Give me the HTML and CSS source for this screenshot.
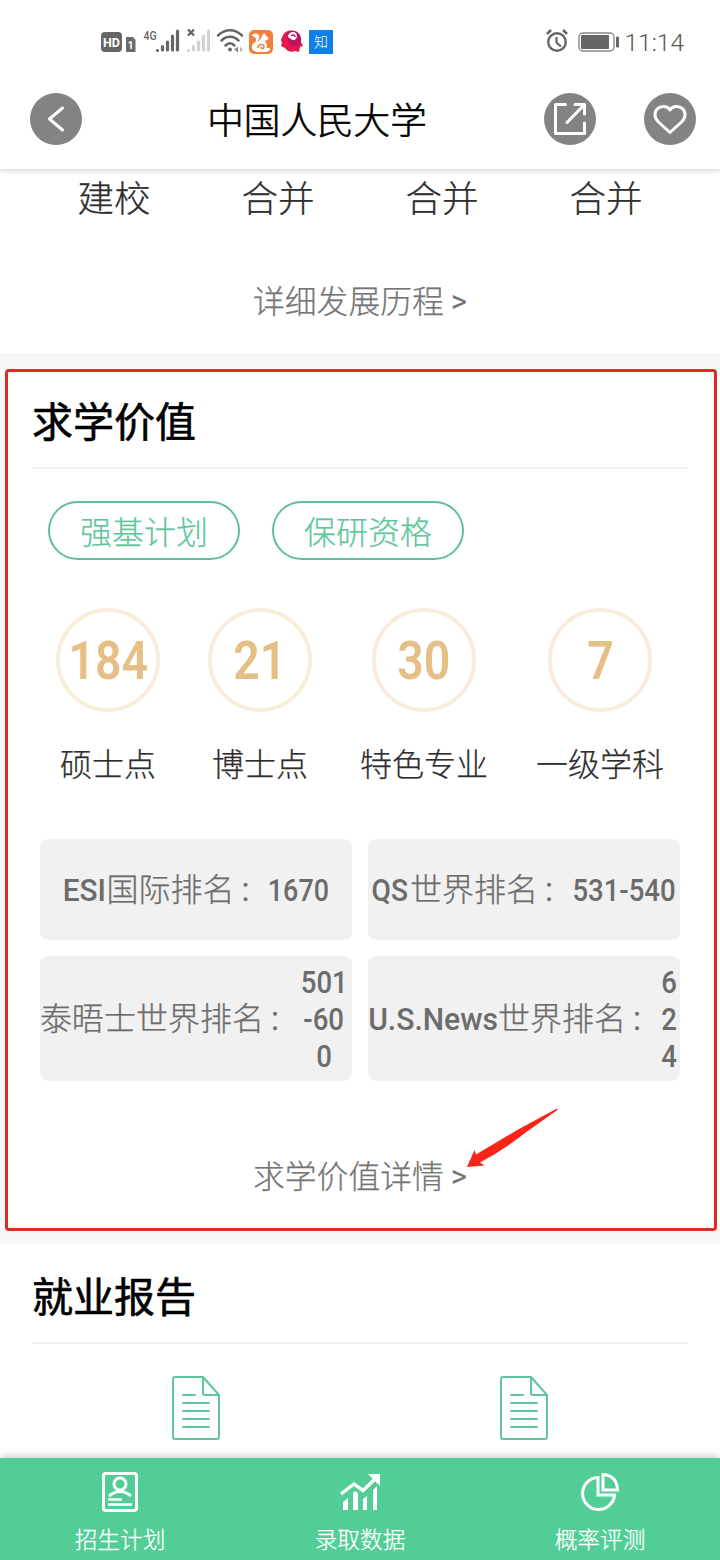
FILE: index.html
```
<!DOCTYPE html>
<html lang="zh-CN">
<head>
<meta charset="utf-8">
<title>中国人民大学</title>
<link rel="stylesheet" href="styles.css">
</head>
<body>
<div class="screen">
  <div class="status">
    <svg class="status-icons" width="240" height="30" viewBox="0 0 240 30">
      <rect x="1" y="5" width="21" height="20" rx="4" fill="#666"/>
      <text x="11.5" y="19.5" class="hd" text-anchor="middle">HD</text>
      <path d="M26 10h7l2.500 3v12h-9.500z" fill="#6c6c6c"/>
      <text x="30.700" y="22" class="sim" text-anchor="middle">1</text>
      <text x="43.500" y="12.500" class="net" textLength="13" lengthAdjust="spacingAndGlyphs">4G</text>
      <g stroke="#666" stroke-width="3.200" stroke-linecap="round">
        <path d="M57.500 23.500v0M62.500 23v-3.500M67.500 23v-8M72.500 23V9M77.500 23V4"/>
        <path d="M88.500 23.500v0M93.500 23v-3.500M98.500 23v-8M103.500 23V9M108.500 23V4" stroke="#d2d2d2"/>
      </g>
      <path d="M88 2.500l6 6M94 2.500l-6 6" stroke="#666" stroke-width="2.400"/>
      <g fill="none" stroke="#666" stroke-width="2.500" stroke-linecap="round">
        <path d="M118 8.500c7-7 17-7 24 0M121.500 13.500c5-5 12-5 17 0M125.500 18.500c3-3 6-3 9 0"/>
      </g>
      <circle cx="130" cy="22.500" r="2" fill="#666"/>
      <path d="M138 19.500v6l-4-3z" fill="#888"/><path d="M140 19.500v6l3-3z" fill="#bbb"/>
      <rect x="149" y="3" width="24" height="24" rx="5" fill="#f0803c"/>
      <path d="M151.500 9c2-4 8-3 8 1 0 2-2 3-2 5l4-4c0-2 1-4 3-5l1 2 3 3-1 2-3 1c2 2 3 4 2 7h3l1 2-4 2h-10c-5-1-6-5-3-9 1-2 2-2 2-4 0-1-1-3-4-3z" fill="#fff"/>
      <path d="M155 11c1 2 0 3-1 5M158 21c0-4 6-5 6-1 0 2-3 2-3 0" stroke="#f0803c" stroke-width="1.400" fill="none"/>
      <path d="M183 8c2-4 8-6 13-3 4 2 5 6 5 10l2 4-3 1-1 5-4-1c-4 2-8 0-10-3l-4-2 1-3-1-3z" fill="#e5174e"/>
      <path d="M187 7c4-6 13-3 14 4 1 5-2 8-6 8-5 0-8-5-8-12z" fill="#b81563"/>
      <path d="M188 10c0-6 9-7 9-1 0 4-4 5-6 3" fill="#fff"/>
      <path d="M191 9c1-2 4-1 4 1" stroke="#b81563" stroke-width="1.500" fill="none"/>
      <rect x="209" y="3" width="24" height="24" fill="#0d80ea"/>
      <text x="221" y="20" class="zhi" text-anchor="middle">知</text>
    </svg>
    <div class="status-right">
      <svg width="76" height="30" viewBox="0 0 76 30" fill="none" stroke="#666">
        <circle cx="14" cy="15" r="8.800" stroke-width="2.400"/>
        <path d="M13.500 10v5.500l4.500 4" stroke-width="2.200"/>
        <path d="M4 7l4-4M24 7l-4-4" stroke-width="2.600"/>
        <rect x="36" y="6" width="35" height="18" rx="4" stroke="#888" stroke-width="1.400"/>
        <rect x="38" y="8" width="28" height="14" rx="1" fill="#666" stroke="none"/>
        <rect x="73" y="9.500" width="3" height="11" rx="1.200" fill="#666" stroke="none"/>
      </svg>
      <span class="clock">11:14</span>
    </div>
  </div>

  <header class="header">
    <svg class="round-btn" viewBox="0 0 52 52"><circle cx="26" cy="26" r="26" fill="#838383"/><path d="M32.500 15L19.500 26l13 11" fill="none" stroke="#fff" stroke-width="3" stroke-linecap="round" stroke-linejoin="round"/></svg>
    <h1 class="school">中国人民大学</h1>
    <div class="header-actions">
      <svg class="round-btn" viewBox="0 0 52 52"><circle cx="26" cy="26" r="26" fill="#838383"/><g fill="none" stroke="#fff" stroke-width="3" stroke-linecap="round" stroke-linejoin="round"><path d="M21.500 11.500h-10v29h29V30"/><path d="M23 29.500L40 12M31 11.500h9.500V21"/></g></svg>
      <svg class="round-btn" viewBox="0 0 52 52"><circle cx="26" cy="26" r="26" fill="#838383"/><path d="M26 17c-4-6-15-4-15 5 0 3 1.500 5 3.500 7L26 39.500 37.500 29c2-2 3.500-4 3.500-7 0-9-11-11-15-5z" fill="none" stroke="#fff" stroke-width="3" stroke-linejoin="round"/></svg>
    </div>
  </header>

  <section class="history">
    <div class="events"><span>建校</span><span>合并</span><span>合并</span><span>合并</span></div>
    <a class="more">详细发展历程 <span class="gt">&gt;</span></a>
  </section>

  <section class="value">
    <h2 class="title">求学价值</h2>
    <div class="tags"><span class="tag">强基计划</span><span class="tag">保研资格</span></div>
    <div class="stats">
      <div class="stat"><div class="ring"><b class="din">184</b></div><span>硕士点</span></div>
      <div class="stat"><div class="ring"><b class="din">21</b></div><span>博士点</span></div>
      <div class="stat"><div class="ring"><b class="din">30</b></div><span>特色专业</span></div>
      <div class="stat"><div class="ring"><b class="din">7</b></div><span>一级学科</span></div>
    </div>
    <div class="ranks">
      <div class="rank"><span class="latin w-esi"><b class="din">ESI</b></span><span class="name">国际排名<i class="colon">：</i></span><span class="latin w-4"><b class="din">1670</b></span></div>
      <div class="rank"><span class="latin w-qs"><b class="din">QS</b></span><span class="name">世界排名<i class="colon">：</i></span><span class="latin w-7"><b class="din">531-540</b></span></div>
      <div class="rank tall"><span class="name">泰晤士世界排名<i class="colon">：</i></span><span class="lines w-3"><b class="din">501</b><b class="din">-60</b><b class="din">0</b></span></div>
      <div class="rank tall"><span class="latin w-us"><b class="din">U.S.News</b></span><span class="name">世界排名<i class="colon">：</i></span><span class="lines w-1"><b class="din">6</b><b class="din">2</b><b class="din">4</b></span></div>
    </div>
    <a class="more value-more">求学价值详情 <span class="gt">&gt;</span></a>
    <div class="frame"></div>
    <svg class="arrow" width="92" height="60" viewBox="0 0 92 60"><path d="M0 59L7.500 42 9 46.500L52 21 90 0.500L91 1.500 58 25Q38 41 13 54.500L17.500 57.500z" fill="#fb2418"/></svg>
  </section>

  <section class="jobs">
    <h2 class="title">就业报告</h2>
    <div class="docs">
      <svg class="doc" viewBox="0 0 48 64"><g fill="none" stroke="#5fc59b" stroke-width="2" stroke-linecap="round" stroke-linejoin="round"><path d="M31 1H3Q1 1 1 3v58q0 2 2 2h42q2 0 2-2V19L31 1v16q0 2 2 2h14"/><path d="M11 19h12M11 27h26M11 35h26M11 43h26M11 51h26"/></g></svg>
      <svg class="doc" viewBox="0 0 48 64"><g fill="none" stroke="#5fc59b" stroke-width="2" stroke-linecap="round" stroke-linejoin="round"><path d="M31 1H3Q1 1 1 3v58q0 2 2 2h42q2 0 2-2V19L31 1v16q0 2 2 2h14"/><path d="M11 19h12M11 27h26M11 35h26M11 43h26M11 51h26"/></g></svg>
    </div>
  </section>

  <nav class="tabbar">
    <div class="tab">
      <svg width="40" height="44" viewBox="0 0 40 44" fill="none" stroke="#fff" stroke-width="3"><rect x="3.500" y="3.500" width="33" height="37" rx="2.500"/><circle cx="20" cy="14" r="6"/><path d="M9 26q11-9 22 0"/><path d="M8 29.500h14M8 34.500h24" stroke-width="2.600"/></svg>
      <span>招生计划</span>
    </div>
    <div class="tab">
      <svg width="40" height="44" viewBox="0 0 40 44" fill="#fff"><path d="M1 24L14 14l9 6.500L35 9" fill="none" stroke="#fff" stroke-width="3.400"/><path d="M28 4h12v12zM3 32l5-4v12H3zM13 23l2-2 3 2v17h-5zM23 29l4-3v14h-4zM33 20l4-4v24h-4z"/></svg>
      <span>录取数据</span>
    </div>
    <div class="tab">
      <svg width="40" height="44" viewBox="0 0 40 44" fill="none" stroke="#fff" stroke-width="3"><path d="M18 7.500A16 16 0 1 0 34.500 25H18z"/><path d="M23 4.500v15.500h14.500q-.5-14.500-14.500-15.500z"/></svg>
      <span>概率评测</span>
    </div>
  </nav>
</div>
</body>
</html>
```
FILE: styles.css
```
* { box-sizing: border-box; }
body {
  margin: 0;
  background: #fff;
  color: #2e2e2e;
  font-family: "Noto Sans CJK SC", sans-serif;
  font-weight: 300;
  -webkit-text-stroke: .25px currentColor;
}
h1, h2 { margin: 0; }
.screen {
  width: 720px;
  height: 1560px;
  overflow: hidden;
  display: flex;
  flex-direction: column;
  background: #fff;
}
.status {
  flex: none;
  position: relative;
  z-index: 2;
  height: 69px;
  padding: 14px 36px 0 100px;
  display: flex;
  justify-content: space-between;
  align-items: center;
  background: #fff;
  -webkit-text-stroke: 0;
}
.status-right {
  display: flex;
  align-items: center;
  gap: 5px;
}
.status svg text { font-family: Roboto, sans-serif; }
.status svg .hd { font-size: 12.5px; font-weight: 700; fill: #fff; }
.status svg .sim { font-size: 10px; font-weight: 700; fill: #fff; }
.status svg .net { font-size: 13px; font-weight: 500; fill: #666; }
.status svg .zhi { font-family: "Noto Sans CJK SC", sans-serif; font-size: 14px; font-weight: 300; fill: #fff; }
.clock {
  padding-top: 2px;
  font: 300 24.5px/30px Roboto, sans-serif;
  color: #555;
}
.header {
  flex: none;
  position: relative;
  z-index: 1;
  height: 100px;
  padding: 0 24px 0 30px;
  display: flex;
  align-items: center;
  background: #fff;
  box-shadow: 0 1px 6px rgba(0, 0, 0, .22);
}
.school {
  flex: 1;
  font-size: 36.6px;
  font-weight: 300;
  line-height: 50px;
  color: #000;
  text-align: center;
  padding-right: 74px;
  padding-left: 82px;
  white-space: nowrap;
  -webkit-text-stroke: .6px #000;
}
.header-actions { display: flex; gap: 48px; }
.round-btn { flex: none; width: 52px; height: 52px; display: block; }
.history {
  flex: none;
  height: 184px;
  padding: 3px 32px 0;
  display: flex;
  flex-direction: column;
  gap: 53px;
}
.events {
  display: grid;
  grid-template-columns: repeat(4, 1fr);
  text-align: center;
  font-size: 36.6px;
  line-height: 50px;
}
.more {
  display: block;
  text-align: center;
  font-size: 31.8px;
  line-height: 48px;
  color: #757575;
}
.gt {
  font-family: Roboto, sans-serif;
  font-size: 31px;
  font-weight: 400;
  line-height: 30px;
  vertical-align: 1px;
  -webkit-text-stroke: 0;
}
.value {
  flex: none;
  position: relative;
  height: 891px;
  padding: 16px 32px 0;
  border-top: 16px solid #f6f6f6;
  border-bottom: 16px solid #f6f6f6;
}
.title {
  height: 84px;
  border-bottom: 2px solid #f0f0f0;
  font-size: 41px;
  font-weight: 400;
  line-height: 69px;
  color: #000;
  -webkit-text-stroke: .6px #000;
}
.tags { display: flex; gap: 32px; padding: 32px 16px 0; }
.tag {
  width: 192px;
  height: 59px;
  border: 2px solid #60bf98;
  border-radius: 30px;
  text-align: center;
  font-size: 32px;
  line-height: 55px;
  color: #5fc79b;
}
.stats {
  display: flex;
  gap: 48px;
  padding: 48px 24px 0;
}
.stat {
  display: flex;
  flex-direction: column;
  align-items: center;
  min-width: 104px;
  font-size: 32px;
  line-height: 48px;
  white-space: nowrap;
}
.ring {
  width: 104px;
  height: 104px;
  margin-bottom: 26px;
  padding-top: 2px;
  border: 4px solid #f8eddb;
  border-radius: 50%;
  display: flex;
  align-items: center;
  justify-content: center;
}
.din {
  flex: none;
  display: block;
  font-family: Roboto, sans-serif;
  font-weight: 500;
  transform: scaleX(.86);
  -webkit-text-stroke: 0;
}
.ring .din { font-size: 54px; font-weight: 600; color: #e5bf85; }
.ranks {
  display: grid;
  grid-template-columns: 312px 312px;
  grid-template-rows: 101px 125px;
  gap: 16px;
  padding: 53px 8px 0;
}
.rank {
  display: flex;
  align-items: center;
  justify-content: center;
  border-radius: 8px;
  background: #f1f1f1;
  color: #6c6c6c;
  font-size: 32px;
  line-height: 37px;
  white-space: nowrap;
}
.rank.tall { justify-content: flex-start; }
.name { margin-top: -2px; }
.colon {
  display: inline-block;
  width: 32px;
  padding-left: 4px;
  font-size: 28px;
  font-style: normal;
}
.latin { flex: none; display: flex; justify-content: center; padding-top: 1px; }
.lines {
  flex: none;
  display: flex;
  flex-direction: column;
  align-items: center;
  padding-top: 1px;
}
.w-esi { width: 45px; }
.w-esi .din { transform: scaleX(.93); }
.w-qs { width: 40px; }
.w-qs .din { transform: scaleX(.88); }
.w-us { width: 130px; }
.w-us .din { transform: scaleX(.94); }
.w-1 { width: 16px; margin-left: 3px; }
.w-3 { width: 56px; }
.w-4 { width: 64px; }
.w-4 .din { transform: scaleX(.84); }
.w-7 { width: 108px; }
.w-7 .din { transform: scaleX(.86); }
.value-more { padding-top: 69px; }
.frame {
  position: absolute;
  left: 5px;
  top: 0;
  width: 712px;
  height: 862px;
  border: 3px solid #e12b22;
  border-radius: 4px;
}
.arrow { position: absolute; left: 467px; top: 739px; }
.jobs {
  flex: none;
  height: 214px;
  padding: 16px 32px 0;
}
.docs {
  display: grid;
  grid-template-columns: 1fr 1fr;
  justify-items: center;
  padding-top: 32px;
}
.doc { width: 48px; height: 64px; }
.tabbar {
  flex: none;
  position: relative;
  height: 102px;
  display: grid;
  grid-template-columns: repeat(3, 1fr);
  background: #52cd96;
  box-shadow: 0 -2px 8px rgba(0, 0, 0, .2);
}
.tab {
  display: flex;
  flex-direction: column;
  align-items: center;
  padding-top: 12px;
  gap: 8px;
  color: #fff;
  font-size: 22.7px;
  line-height: 33px;
}
```
